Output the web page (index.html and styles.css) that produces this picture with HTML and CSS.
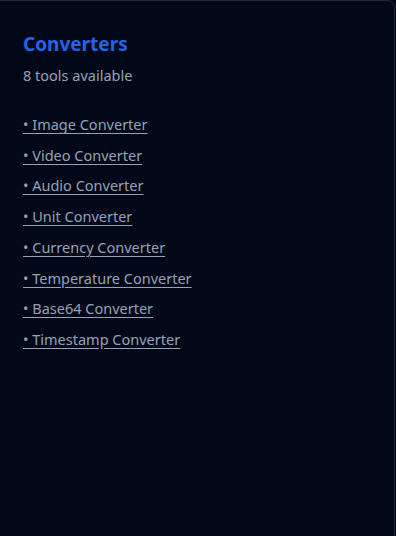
FILE: index.html
```html
<!DOCTYPE html>
<html>
<head>
<meta charset="utf-8">
<link rel="stylesheet" href="styles.css">
</head>
<body>
<div class="card">
  <h2 class="title">Converters</h2>
  <p class="sub">8 tools available</p>
  <ul class="list">
    <li><a href="#">• Image Converter</a></li>
    <li><a href="#">• Video Converter</a></li>
    <li><a href="#">• Audio Converter</a></li>
    <li><a href="#">• Unit Converter</a></li>
    <li><a href="#">• Currency Converter</a></li>
    <li><a href="#">• Temperature Converter</a></li>
    <li><a href="#">• Base64 Converter</a></li>
    <li><a href="#">• Timestamp Converter</a></li>
  </ul>
</div>
</body>
</html>
```
FILE: styles.css
```css
html, body {
  margin: 0;
  padding: 0;
  background: #020817;
  overflow: hidden;
  height: 536px;
}
.card {
  box-sizing: border-box;
  width: 405px;
  margin-left: -10px;
  height: 560px;
  background: #020817;
  border: 1px solid #1e293b;
  border-radius: 8px;
  padding: 29px 24px 24px 32px;
  font-family: "Noto Sans", sans-serif;
}
.title {
  margin: 0;
  font-size: 19px;
  line-height: 28px;
  font-weight: 700;
  color: #2563eb;
}
.sub {
  margin: 7px 0 0;
  font-size: 14.5px;
  line-height: 20px;
  color: #94a3b8;
}
.list {
  list-style: none;
  margin: 29px 0 0;
  padding: 0;
  display: flex;
  flex-direction: column;
  gap: 10px;
}
.list li {
  font-size: 14.5px;
  line-height: 20.7px;
}
.list a {
  color: #94a3b8;
  text-decoration: underline;
  text-underline-offset: 3px;
}
```
